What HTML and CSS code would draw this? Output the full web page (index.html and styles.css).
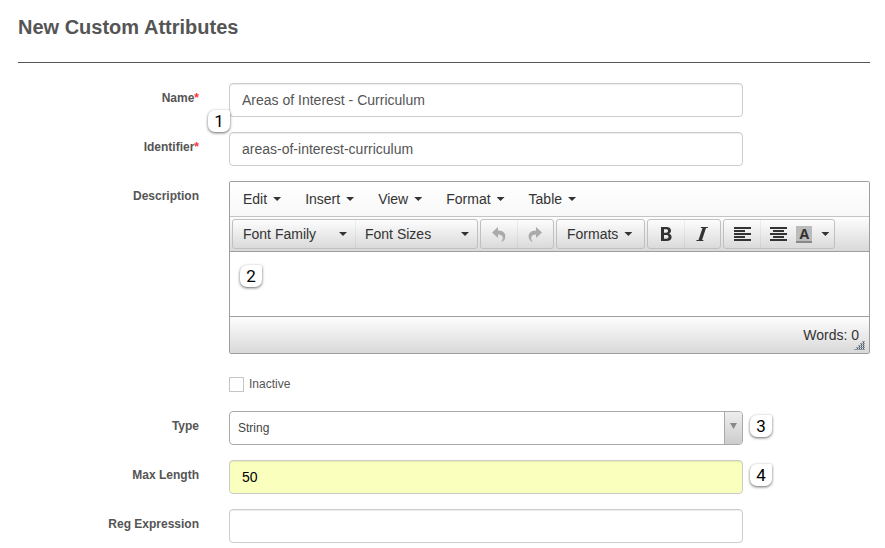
FILE: index.html
```html
<!DOCTYPE html>
<html lang="en">
<head>
<meta charset="utf-8">
<title>New Custom Attributes</title>
<link rel="stylesheet" href="styles.css">
</head>
<body>
<main class="page">
  <h1 class="title">New Custom Attributes</h1>
  <form class="form">
    <div class="row">
      <label class="label" for="name">Name<span class="required">*</span></label>
      <div class="field">
        <input class="input" id="name" type="text" value="Areas of Interest - Curriculum">
        <span class="badge badge-between">1</span>
      </div>
    </div>
    <div class="row">
      <label class="label" for="identifier">Identifier<span class="required">*</span></label>
      <div class="field"><input class="input" id="identifier" type="text" value="areas-of-interest-curriculum"></div>
    </div>
    <div class="row">
      <label class="label" for="description">Description</label>
      <div class="editor">
        <div class="menubar">
          <button class="menu" type="button">Edit<span class="caret"></span></button>
          <button class="menu" type="button">Insert<span class="caret"></span></button>
          <button class="menu" type="button">View<span class="caret"></span></button>
          <button class="menu" type="button">Format<span class="caret"></span></button>
          <button class="menu" type="button">Table<span class="caret"></span></button>
        </div>
        <div class="toolbar">
          <div class="group">
            <button class="tool tool-list" type="button">Font Family<span class="caret"></span></button>
            <button class="tool tool-list" type="button">Font Sizes<span class="caret"></span></button>
          </div>
          <div class="group">
            <button class="tool tool-icon faded" type="button" aria-label="Undo">
              <svg width="16" height="16" viewBox="0 0 16 16"><path d="M1 6.500L7 1V4.500C12.500 4.500 15.500 8 14 12.500C13.500 14.500 12 15.500 10 16C13 13 12.500 8.500 7 8.500V12Z"/></svg>
            </button>
            <button class="tool tool-icon faded" type="button" aria-label="Redo">
              <svg width="16" height="16" viewBox="0 0 16 16"><path d="M15 6.500L9 1V4.500C3.500 4.500 0.500 8 2 12.500C2.500 14.500 4 15.500 6 16C3 13 3.500 8.500 9 8.500V12Z"/></svg>
            </button>
          </div>
          <div class="group">
            <button class="tool tool-text" type="button">Formats<span class="caret"></span></button>
          </div>
          <div class="group">
            <button class="tool tool-icon" type="button" aria-label="Bold">
              <svg width="16" height="16" viewBox="0 0 16 16"><path fill-rule="evenodd" d="M3 1H8.500C11.500 1 13 2.500 13 4.700C13 6.100 12.300 7.100 11 7.700C12.700 8.200 13.600 9.400 13.600 11C13.600 13.500 11.700 15 8.700 15H3ZM6 3.300V6.700H8C9.400 6.700 10 6.100 10 5C10 3.900 9.400 3.300 8 3.300ZM6 9V12.700H8.200C9.800 12.700 10.500 12.100 10.500 10.800C10.500 9.600 9.800 9 8.200 9Z"/></svg>
            </button>
            <button class="tool tool-icon" type="button" aria-label="Italic">
              <svg width="16" height="16" viewBox="0 0 16 16"><path d="M7 1H14L13.700 2H12L8 14H9.500L9.200 15H2.300L2.600 14H4.500L8.500 2H6.700Z"/></svg>
            </button>
          </div>
          <div class="group">
            <button class="tool tool-icon" type="button" aria-label="Align left">
              <svg width="17" height="14" viewBox="0 0 17 14"><path d="M0 0H17V2H0ZM0 3H11V5H0ZM0 6H17V8H0ZM0 9H11V11H0ZM0 12H17V14H0Z"/></svg>
            </button>
            <button class="tool tool-icon" type="button" aria-label="Align center">
              <svg width="17" height="14" viewBox="0 0 17 14"><path d="M0 0H17V2H0ZM3 3H14V5H3ZM0 6H17V8H0ZM3 9H14V11H3ZM0 12H17V14H0Z"/></svg>
            </button>
            <button class="tool tool-color" type="button" aria-label="Text color"><span class="swatch">A</span><span class="caret"></span></button>
          </div>
        </div>
        <div class="content">
          <textarea class="text" id="description"></textarea>
          <span class="badge badge-inside">2</span>
        </div>
        <div class="status">Words: 0
          <svg class="grip" width="11" height="9" viewBox="0 0 11 9"><path stroke-dasharray="1 1" d="M10.500 0.500H8M10.500 2.500H6M10.500 4.500H4M10.500 6.500H2M10.500 8.500H0M10 1.500H8M10 3.500H6M10 5.500H4M10 7.500H2"/></svg>
        </div>
      </div>
    </div>
    <div class="row row-check">
      <label class="check"><input class="box" type="checkbox">Inactive</label>
    </div>
    <div class="row">
      <label class="label" for="type">Type</label>
      <div class="field">
        <select class="select" id="type"><option>String</option></select>
        <span class="arrow"><svg width="7" height="6" viewBox="0 0 7 6"><path d="M0 0H7L3.500 6Z"/></svg></span>
        <span class="badge badge-beside">3</span>
      </div>
    </div>
    <div class="row">
      <label class="label" for="length">Max Length</label>
      <div class="field">
        <input class="input filled" id="length" type="text" value="50">
        <span class="badge badge-beside">4</span>
      </div>
    </div>
    <div class="row">
      <label class="label" for="expression">Reg Expression</label>
      <div class="field"><input class="input" id="expression" type="text"></div>
    </div>
  </form>
</main>
</body>
</html>
```

FILE: styles.css
```css
* { box-sizing: border-box; }

body {
  margin: 0;
  background: #fff;
  color: #555;
  font: 14px/20px "Liberation Sans", Arial, sans-serif;
}

button, input, select, textarea { font: inherit; color: inherit; margin: 0; }
svg { display: block; fill: currentColor; }

.page { padding: 12px 15px 5px 18px; }

.title {
  margin: 0 0 20px;
  padding-bottom: 20px;
  border-bottom: 1px solid #555;
  font-size: 20px;
  line-height: 30px;
}

.form { display: grid; gap: 15px; }

.row {
  display: grid;
  grid-template-columns: 181px minmax(0, 1fr);
  column-gap: 30px;
}

.label {
  padding-top: 5px;
  font-size: 12px;
  font-weight: bold;
  text-align: right;
}

.required { color: #f33; }

.field { position: relative; width: 100%; max-width: 514px; }

.input {
  display: block;
  width: 100%;
  height: 34px;
  padding: 6px 12px;
  border: 1px solid #ccc;
  border-radius: 4px;
  background: #fff;
  box-shadow: inset 0 1px 1px rgba(0, 0, 0, .075);
}

.filled { background: #faffbd; color: #000; }

.badge {
  position: absolute;
  width: 22px;
  height: 22px;
  border-radius: 7px 2px 7px 7px;
  background: #fff;
  box-shadow: 0 1px 3px rgba(0, 0, 0, .6);
  color: #000;
  font: 17px/22px Roboto, sans-serif;
  text-align: center;
}

.badge-between { left: -21px; top: 27px; }
.badge-inside { left: 10px; top: 13px; }
.badge-beside { left: calc(100% + 7px); top: 4px; }

.editor {
  border: 1px solid #9e9e9e;
  border-radius: 2px;
  color: #333;
}

.menubar {
  display: flex;
  height: 35px;
  padding-left: 1px;
  border-bottom: 1px solid #c4c4c4;
  background: linear-gradient(#fff, #f8f8f8);
}

.menu, .tool {
  display: flex;
  align-items: center;
  border: 0;
  background: none;
}

.menu { padding: 0 12px; }

.caret {
  width: 8px;
  height: 4px;
  margin-left: 6px;
  background: #333;
  clip-path: polygon(0 0, 100% 0, 50% 100%);
}

.toolbar {
  display: flex;
  gap: 2px;
  height: 35px;
  padding: 2px;
  border-bottom: 1px solid #9e9e9e;
  background: linear-gradient(#fdfdfd, #d9d9d9);
}

.group {
  display: flex;
  height: 30px;
  border: 1px solid #c0c0c0;
  border-radius: 3px;
  background: linear-gradient(#fdfdfd, #dadada);
}

.tool { padding: 0 10px; }
.tool + .tool { box-shadow: inset 1px 0 rgba(0, 0, 0, .05); }
.tool-list { width: 122px; padding-right: 8px; }
.tool-list .caret { margin-left: auto; }
.tool-text { padding-right: 12px; }
.tool-icon { width: 36px; padding: 0; justify-content: center; }
.faded { color: #aaa; }
.tool-color { padding: 0 5px 0 0; }
.tool + .tool-color { box-shadow: none; }
.tool-color .caret { margin-left: 9px; }

.swatch {
  width: 16px;
  height: 17px;
  border-bottom: 2px solid #888;
  background: #bbb;
  font: bold 14px/16px "Open Sans", sans-serif;
}

.content { position: relative; height: 64px; }

.text {
  display: block;
  width: 100%;
  height: 100%;
  padding: 8px;
  border: 0;
  resize: none;
  background: #fff;
}

.status {
  position: relative;
  height: 37px;
  padding: 8px 10px;
  border-top: 1px solid #9e9e9e;
  background: linear-gradient(#fdfdfd, #d9d9d9);
  text-align: right;
}

.grip { position: absolute; right: 4px; bottom: 3px; stroke: #456; }

.row-check { padding: 5px 0 2px; }

.check {
  display: flex;
  grid-column: 2;
  align-items: center;
  gap: 5px;
  font-size: 12px;
}

.box {
  appearance: none;
  width: 15px;
  height: 15px;
  border: 1px solid #c4c4c4;
  background: #fff;
}

.select {
  display: block;
  appearance: none;
  width: 100%;
  height: 34px;
  padding: 0 26px 0 8px;
  border: 1px solid #aaa;
  border-radius: 4px;
  background: #fff;
  color: #444;
  font-size: 12px;
}

.arrow {
  position: absolute;
  inset: 1px 1px 1px auto;
  width: 18px;
  padding: 11px 5px;
  border-left: 1px solid #aaa;
  border-radius: 0 3px 3px 0;
  background: linear-gradient(#eee, #ccc);
  color: #888;
  pointer-events: none;
}
```
